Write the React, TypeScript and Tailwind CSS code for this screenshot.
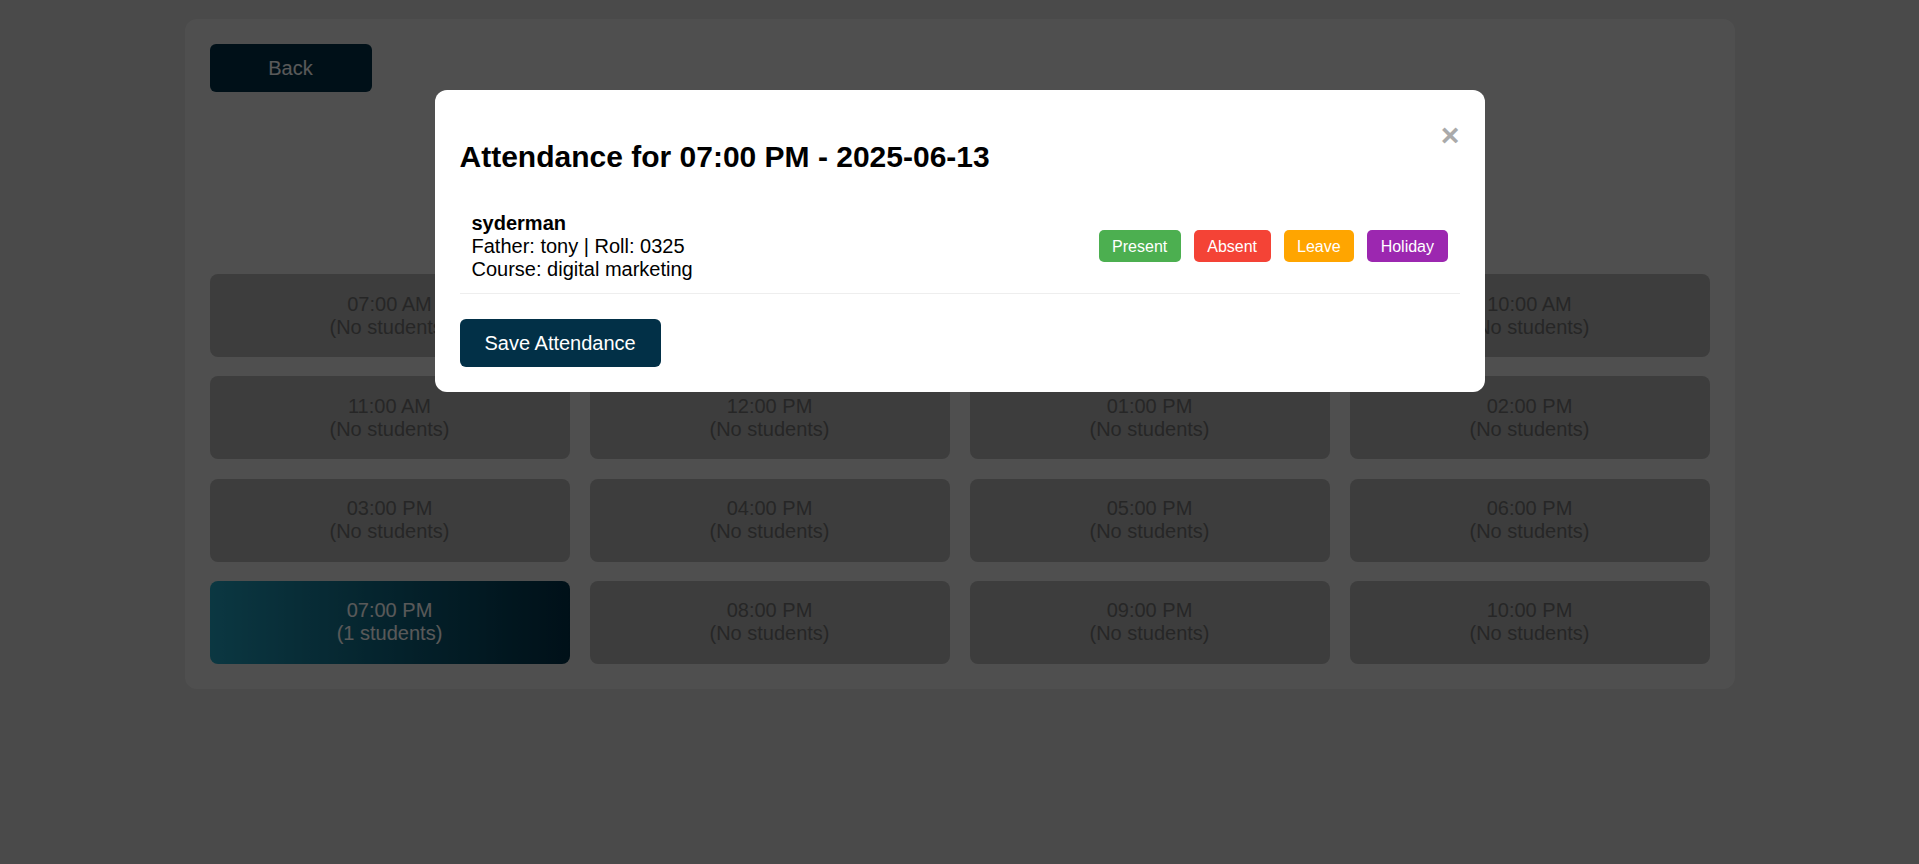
import { useState } from 'react';

type Status = 'Present' | 'Absent' | 'Leave' | 'Holiday';

const slots = [
  { time: '07:00 AM', count: 0 },
  { time: '08:00 AM', count: 0 },
  { time: '09:00 AM', count: 0 },
  { time: '10:00 AM', count: 0 },
  { time: '11:00 AM', count: 0 },
  { time: '12:00 PM', count: 0 },
  { time: '01:00 PM', count: 0 },
  { time: '02:00 PM', count: 0 },
  { time: '03:00 PM', count: 0 },
  { time: '04:00 PM', count: 0 },
  { time: '05:00 PM', count: 0 },
  { time: '06:00 PM', count: 0 },
  { time: '07:00 PM', count: 1 },
  { time: '08:00 PM', count: 0 },
  { time: '09:00 PM', count: 0 },
  { time: '10:00 PM', count: 0 },
];

const statusButtons: { label: Status; cls: string }[] = [
  { label: 'Present', cls: 'bg-[#4caf50]' },
  { label: 'Absent', cls: 'bg-[#f44336]' },
  { label: 'Leave', cls: 'bg-[#ffa500]' },
  { label: 'Holiday', cls: 'bg-[#9c27b0]' },
];

export default function App() {
  const [open, setOpen] = useState(true);
  const [status, setStatus] = useState<Status | null>(null);

  return (
    <div className="min-h-screen bg-[#d3d3d3] pt-[19px] font-['Liberation_Sans',Arial,sans-serif]">
      <div className="mx-auto w-[1550px] rounded-[12px] bg-[#e3e3e3] p-[25px]">
        <button
          type="button"
          className="h-[48px] w-[162px] rounded-[6px] bg-[#023047] text-[20px] text-white"
        >
          Back
        </button>

        {/* date picker area sits under the modal */}
        <div className="h-[182px]" />

        <div className="grid grid-cols-4 gap-x-5 gap-y-[19.33px]">
          {slots.map((s) => {
            const active = s.count > 0;
            return (
              <button
                key={s.time}
                type="button"
                onClick={() => active && setOpen(true)}
                className={`flex h-[83px] flex-col items-center justify-center rounded-[8px] text-[20px] leading-[23px] ${
                  active
                    ? 'bg-gradient-to-r from-[#219ebc] to-[#023047] text-white'
                    : 'bg-[#afafaf] text-[#6e6e6e]'
                }`}
              >
                <span>{s.time}</span>
                <span>{active ? `(${s.count} students)` : '(No students)'}</span>
              </button>
            );
          })}
        </div>
      </div>

      {open && (
        <div className="fixed inset-0 bg-black/65">
          <div className="relative mx-auto mt-[90px] w-[1050px] rounded-[12px] bg-white p-[25px]">
            <button
              type="button"
              onClick={() => setOpen(false)}
              className="absolute right-[25px] top-[29px] text-[32px] font-bold leading-none text-[#aaa]"
            >
              ×
            </button>
            <h2 className="my-[25px] text-[30px] font-bold leading-[34.5px] text-black">
              Attendance for 07:00 PM - 2025-06-13
            </h2>

            <div className="flex items-center justify-between border-b border-[#eee] p-3 text-[20px] leading-[23px] text-black">
              <div>
                <div className="font-bold">syderman</div>
                <div>Father: tony | Roll: 0325</div>
                <div>Course: digital marketing</div>
              </div>
              <div className="flex gap-[13px]">
                {statusButtons.map((b) => (
                  <button
                    key={b.label}
                    type="button"
                    onClick={() => setStatus(b.label)}
                    className={`h-[32px] rounded-[5px] px-[13.5px] text-[16px] text-white ${b.cls} ${
                      status === b.label ? 'ring-2 ring-black/30' : ''
                    }`}
                  >
                    {b.label}
                  </button>
                ))}
              </div>
            </div>

            <button
              type="button"
              className="mt-[25px] h-[48px] rounded-[6px] bg-[#023047] px-[25px] text-[20px] text-white"
            >
              Save Attendance
            </button>
          </div>
        </div>
      )}
    </div>
  );
}
